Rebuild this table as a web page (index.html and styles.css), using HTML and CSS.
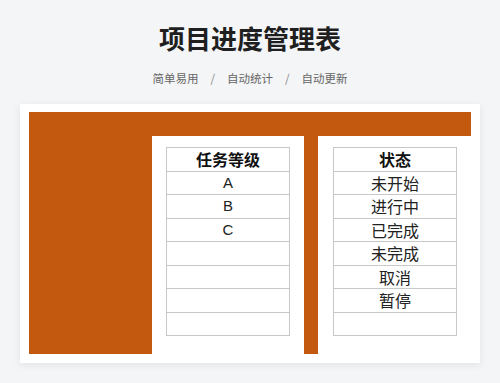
FILE: index.html
```html
<!DOCTYPE html>
<html lang="zh">
<head>
<meta charset="utf-8">
<title>项目进度管理表</title>
<link rel="stylesheet" href="styles.css">
</head>
<body>
<header class="head">
  <h1 class="title">项目进度管理表</h1>
  <p class="sub"><span>简单易用</span><span class="sep">/</span><span>自动统计</span><span class="sep">/</span><span>自动更新</span></p>
</header>
<main class="card">
  <div class="frame">
    <section class="panel panel-a">
      <div class="grid">
        <div class="row hd">任务等级</div>
        <div class="row lat">A</div>
        <div class="row lat">B</div>
        <div class="row lat">C</div>
        <div class="row"></div>
        <div class="row"></div>
        <div class="row"></div>
        <div class="row"></div>
      </div>
    </section>
    <section class="panel panel-b">
      <div class="grid">
        <div class="row hd">状态</div>
        <div class="row">未开始</div>
        <div class="row">进行中</div>
        <div class="row">已完成</div>
        <div class="row">未完成</div>
        <div class="row">取消</div>
        <div class="row">暂停</div>
        <div class="row"></div>
      </div>
    </section>
  </div>
</main>
</body>
</html>
```
FILE: styles.css
```css
* { box-sizing: border-box; }
html, body { margin: 0; padding: 0; }
body {
  background: #f4f5f7;
  font-family: "Noto Sans CJK SC", "Noto Sans", sans-serif;
  width: 500px;
  height: 383px;
  overflow: hidden;
}
.head {
  padding-top: 20px;
  text-align: center;
}
.title {
  margin: 0;
  font-size: 26px;
  line-height: 36px;
  font-weight: 700;
  color: #1f1f1f;
}
.sub {
  margin: 12px 0 0;
  font-size: 11.5px;
  line-height: 20px;
  color: #666;
  display: flex;
  justify-content: center;
  gap: 12px;
}
.sep { color: #888; }
.card {
  margin: 16px 20px 0;
  height: 259px;
  background: #fff;
  box-shadow: 0 2px 8px rgba(0,0,0,0.08);
  padding: 8px 9px 9px 9px;
}
.frame {
  height: 242px;
  background: #c3580f;
  padding: 24px 0 0 123px;
  display: flex;
  gap: 14px;
}
.panel {
  background: #fff;
  height: 218px;
  padding-top: 11px;
}
.panel-a { width: 152px; padding-left: 14px; }
.panel-b { flex: 1; padding-left: 15px; }
.grid {
  width: 124px;
  border: 1px solid #c8c8c8;
  border-bottom: 0;
}
.panel-b .grid { width: 124px; }
.row {
  height: 23.5px;
  border-bottom: 1px solid #c8c8c8;
  text-align: center;
  font-size: 16px;
  line-height: 22px;
  color: #222;
}
.row.hd { font-weight: 700; color: #111; }
.row.lat { font-family: "Liberation Sans", Arial, sans-serif; font-size: 15px; }
```
